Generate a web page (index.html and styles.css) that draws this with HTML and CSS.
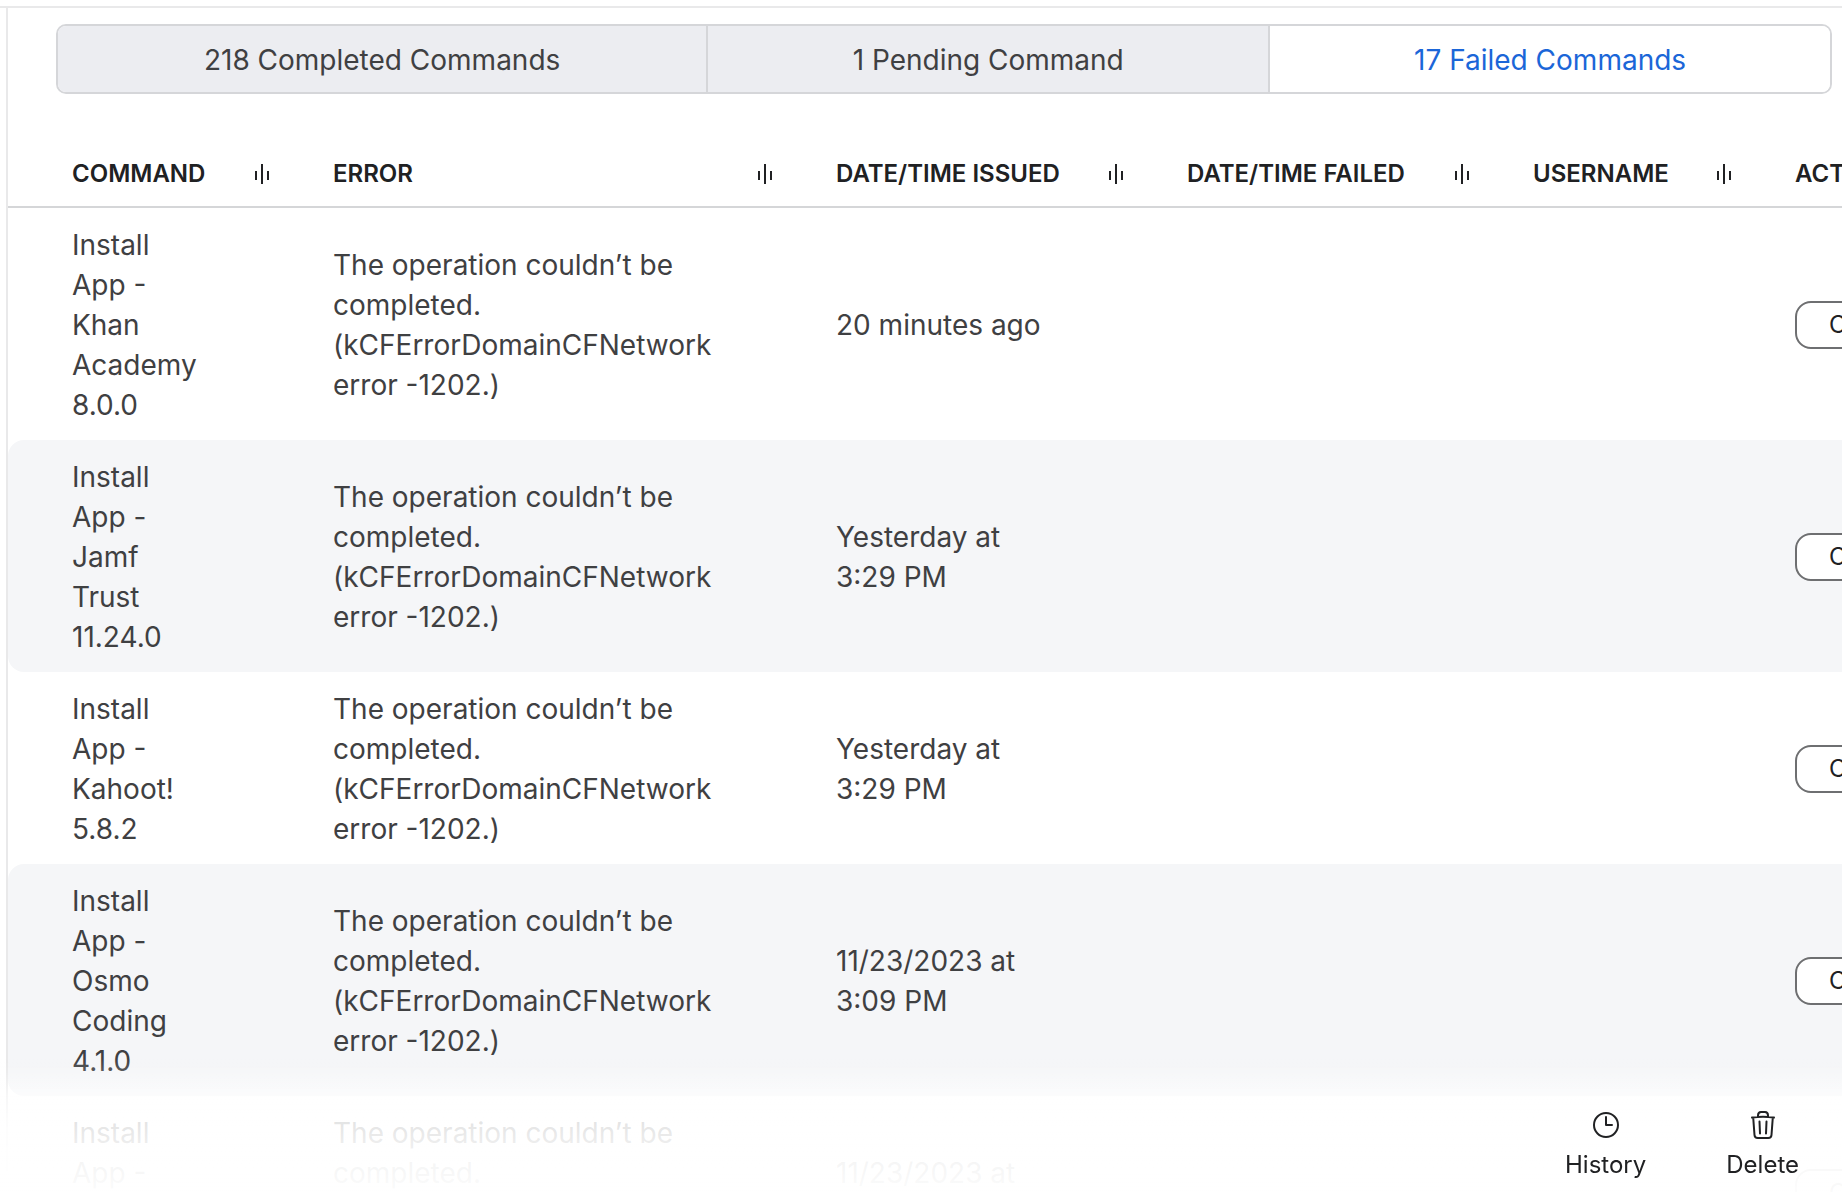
FILE: index.html
```html
<!DOCTYPE html>
<html lang="en">
<head>
<meta charset="utf-8">
<title>Failed Commands</title>
<link rel="stylesheet" href="styles.css">
</head>
<body>
<svg class="sprite" aria-hidden="true">
  <symbol id="resize" viewBox="0 0 14 20"><path d="M1 7v9M7 0v20M13 7v9" fill="none" stroke="currentColor" stroke-width="2"/></symbol>
</svg>
<main class="page">
  <section class="panel">
    <div class="tabs" role="tablist">
      <button class="tab" role="tab" aria-selected="false">218 Completed Commands</button>
      <button class="tab" role="tab" aria-selected="false">1 Pending Command</button>
      <button class="tab" role="tab" aria-selected="true">17 Failed Commands</button>
    </div>
    <table class="commands">
      <colgroup>
        <col class="col-command"><col class="col-error"><col class="col-issued"><col class="col-failed"><col class="col-user"><col class="col-actions">
      </colgroup>
      <thead>
        <tr>
          <th scope="col"><div class="head">COMMAND<svg class="resize"><use href="#resize"/></svg></div></th>
          <th scope="col"><div class="head">ERROR<svg class="resize"><use href="#resize"/></svg></div></th>
          <th scope="col"><div class="head">DATE/TIME ISSUED<svg class="resize"><use href="#resize"/></svg></div></th>
          <th scope="col"><div class="head">DATE/TIME FAILED<svg class="resize"><use href="#resize"/></svg></div></th>
          <th scope="col"><div class="head">USERNAME<svg class="resize"><use href="#resize"/></svg></div></th>
          <th scope="col"><div class="head">ACTIONS</div></th>
        </tr>
      </thead>
      <tbody>
        <tr>
          <td>Install App - Khan Academy 8.0.0</td>
          <td>The operation couldn’t be completed. (kCFErrorDomainCFNetwork error -1202.)</td>
          <td>20 minutes ago</td><td></td><td></td>
          <td><button class="clear">Clear</button></td>
        </tr>
        <tr>
          <td>Install App - Jamf Trust 11.24.0</td>
          <td>The operation couldn’t be completed. (kCFErrorDomainCFNetwork error -1202.)</td>
          <td>Yesterday at 3:29 PM</td><td></td><td></td>
          <td><button class="clear">Clear</button></td>
        </tr>
        <tr>
          <td>Install App - Kahoot! 5.8.2</td>
          <td>The operation couldn’t be completed. (kCFErrorDomainCFNetwork error -1202.)</td>
          <td>Yesterday at 3:29 PM</td><td></td><td></td>
          <td><button class="clear">Clear</button></td>
        </tr>
        <tr>
          <td>Install App - Osmo Coding 4.1.0</td>
          <td>The operation couldn’t be completed. (kCFErrorDomainCFNetwork error -1202.)</td>
          <td>11/23/2023 at 3:09 PM</td><td></td><td></td>
          <td><button class="clear">Clear</button></td>
        </tr>
        <tr>
          <td>Install App - Kahoot! 5.8.2</td>
          <td>The operation couldn’t be completed. (kCFErrorDomainCFNetwork error -1202.)</td>
          <td>11/23/2023 at 3:09 PM</td><td></td><td></td>
          <td><button class="clear">Clear</button></td>
        </tr>
      </tbody>
    </table>
  </section>
</main>
<footer class="toolbar">
  <button class="tool">
    <svg class="tool-icon" viewBox="0 0 28 28"><circle cx="14" cy="14" r="12"/><path d="M14 6v8h6"/></svg>
    History
  </button>
  <button class="tool">
    <svg class="tool-icon" viewBox="0 0 28 28"><path d="M3 6.500Q14 5 25 6.500M9 5.500V4.500Q9 1 12 1h4q3 0 3 3.500v1M4.200 6.500l1.300 17.500q.2 3 3.200 3h10.600q3 0 3.200-3L23.800 6.500M10.500 10.500l.5 12M17.500 10.500l-.5 12"/></svg>
    Delete
  </button>
</footer>
</body>
</html>
```
FILE: styles.css
```css
* {
  box-sizing: border-box;
}

body {
  margin: 0;
  height: 100vh;
  overflow: hidden;
  background: #fff;
  color: #3f4042;
  font-family: Inter, "Liberation Sans", sans-serif;
  font-size: 28px;
  line-height: 40px;
}

button {
  margin: 0;
  font: inherit;
  cursor: pointer;
}

.sprite {
  display: none;
}

.page {
  margin-top: 6px;
  border-top: 2px solid #e9e9ea;
  padding-left: 6px;
}

.panel {
  overflow: hidden;
  border-left: 2px solid #e9e9ea;
  padding-top: 16px;
}

.tabs {
  display: grid;
  grid-template-columns: 15fr 13fr 13fr;
  height: 70px;
  margin: 0 10px 46px 48px;
  border: 2px solid #d5d6d9;
  border-radius: 10px;
  overflow: hidden;
}

.tab {
  border: 0;
  padding: 2px 16px 0;
  background: #ecedf1;
  color: #3f4042;
}

.tab + .tab {
  border-left: 2px solid #d5d6d9;
}

.tab[aria-selected="true"] {
  background: #fff;
  color: #1b66d8;
}

.commands {
  table-layout: fixed;
  width: 2050px;
  border-spacing: 0;
}

.col-command { width: 325px; }
.col-error { width: 503px; }
.col-issued { width: 351px; }
.col-failed { width: 346px; }
.col-user { width: 262px; }

th {
  height: 68px;
  padding: 2px 64px 0 0;
  border-bottom: 2px solid #d5d6d8;
  color: #202123;
  font-size: 24px;
  font-weight: 600;
  text-align: left;
  white-space: nowrap;
}

.head {
  display: flex;
  align-items: center;
  justify-content: space-between;
}

.resize {
  width: 14px;
  height: 20px;
}

td {
  padding: 17px 128px 15px 0;
  vertical-align: middle;
}

th:first-child,
td:first-child {
  padding-left: 64px;
}

th:last-child,
td:last-child {
  padding-right: 48px;
}

tbody tr:nth-child(even) td {
  background: #f5f6f8;
}

tbody tr:nth-child(even) td:first-child {
  border-radius: 16px 0 0 16px;
}

.clear {
  display: block;
  height: 48px;
  padding: 0 32px;
  border: 2px solid #6e6f71;
  border-radius: 16px;
  background: #fff;
  color: #202123;
  font-size: 24px;
}

.toolbar {
  position: fixed;
  right: 0;
  bottom: 0;
  left: 0;
  display: flex;
  justify-content: flex-end;
  align-items: flex-end;
  gap: 80px;
  height: 142px;
  padding: 0 43px 11px;
  background: linear-gradient(rgba(255, 255, 255, 0) 6%, rgba(255, 255, 255, 0.12) 14%, rgba(255, 255, 255, 0.62) 32%, rgba(255, 255, 255, 0.86) 50%, rgba(255, 255, 255, 0.95) 78%, rgba(255, 255, 255, 0.98));
}

.tool {
  display: flex;
  flex-direction: column;
  align-items: center;
  gap: 10px;
  border: 0;
  padding: 0;
  background: none;
  color: #202123;
  font-size: 24px;
  line-height: 32px;
}

.tool-icon {
  width: 28px;
  height: 28px;
  fill: none;
  stroke: currentColor;
  stroke-width: 2;
  stroke-linecap: round;
  stroke-linejoin: round;
}
```
